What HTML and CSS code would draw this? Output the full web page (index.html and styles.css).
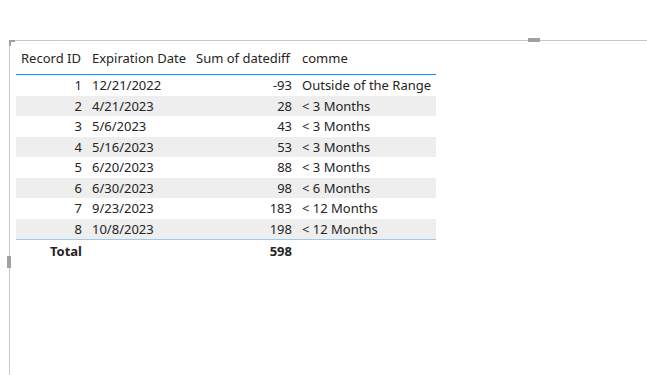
FILE: index.html
```html
<!DOCTYPE html>
<html>
<head>
<meta charset="utf-8">
<link rel="stylesheet" href="styles.css">
</head>
<body>
<div class="visual">
  <span class="corner"></span>
  <span class="handle-top"></span>
  <span class="handle-left"></span>
  <table class="grid">
    <thead>
      <tr><th class="c1">Record ID</th><th class="c2">Expiration Date</th><th class="c3">Sum of datediff</th><th class="c4">comme</th></tr>
    </thead>
    <tbody>
      <tr><td class="num">1</td><td>12/21/2022</td><td class="num">-93</td><td>Outside of the Range</td></tr>
      <tr class="alt"><td class="num">2</td><td>4/21/2023</td><td class="num">28</td><td>&lt; 3 Months</td></tr>
      <tr><td class="num">3</td><td>5/6/2023</td><td class="num">43</td><td>&lt; 3 Months</td></tr>
      <tr class="alt"><td class="num">4</td><td>5/16/2023</td><td class="num">53</td><td>&lt; 3 Months</td></tr>
      <tr><td class="num">5</td><td>6/20/2023</td><td class="num">88</td><td>&lt; 3 Months</td></tr>
      <tr class="alt"><td class="num">6</td><td>6/30/2023</td><td class="num">98</td><td>&lt; 6 Months</td></tr>
      <tr><td class="num">7</td><td>9/23/2023</td><td class="num">183</td><td>&lt; 12 Months</td></tr>
      <tr class="alt last"><td class="num">8</td><td>10/8/2023</td><td class="num">198</td><td>&lt; 12 Months</td></tr>
    </tbody>
    <tfoot>
      <tr><td class="num">Total</td><td></td><td class="num">598</td><td></td></tr>
    </tfoot>
  </table>
</div>
</body>
</html>
```
FILE: styles.css
```css
html, body {
  margin: 0;
  padding: 0;
  background: #ffffff;
}
body {
  width: 647px;
  height: 375px;
  overflow: hidden;
  font-family: "Noto Sans", "Open Sans", sans-serif;
  font-size: 13px;
  color: #252423;
}
.visual {
  position: relative;
  margin: 40px 0 0 9px;
  height: 335px;
  border-top: 1px solid #c8c8c8;
  border-left: 1px solid #c8c8c8;
  padding: 8px 0 0 6px;
  box-sizing: border-box;
}
.corner {
  position: absolute;
  left: -1px;
  top: -1px;
  width: 4px;
  height: 4px;
  border-top: 2px solid #a0a0a0;
  border-left: 2px solid #a0a0a0;
}
.handle-top {
  position: absolute;
  left: 518px;
  top: -3px;
  width: 12px;
  height: 4px;
  background: #a0a0a0;
}
.handle-left {
  position: absolute;
  left: -3px;
  top: 215px;
  width: 4px;
  height: 12px;
  background: #a0a0a0;
}
.grid {
  border-collapse: collapse;
  white-space: nowrap;
}
.grid th {
  font-weight: normal;
  text-align: left;
  height: 18px;
  line-height: 18px;
  padding: 0 5px 7px 5px;
  border-bottom: 1px solid #118dff;
}
.grid th.c1 { width: 61px; }
.grid th.c2 { width: 93px; }
.grid th.c3 { width: 96px; }
.grid th.c4 { width: 129px; }
.grid td {
  height: 20.5px;
  line-height: 20px;
  padding: 0 5px;
  text-align: left;
}
.grid td.num { text-align: right; }
.grid tr.alt td { background: #eeeeee; }
.grid tr.last td { border-bottom: 1px solid #9ccbf2; }
.grid tfoot td {
  font-weight: bold;
  height: 21px;
}
```
